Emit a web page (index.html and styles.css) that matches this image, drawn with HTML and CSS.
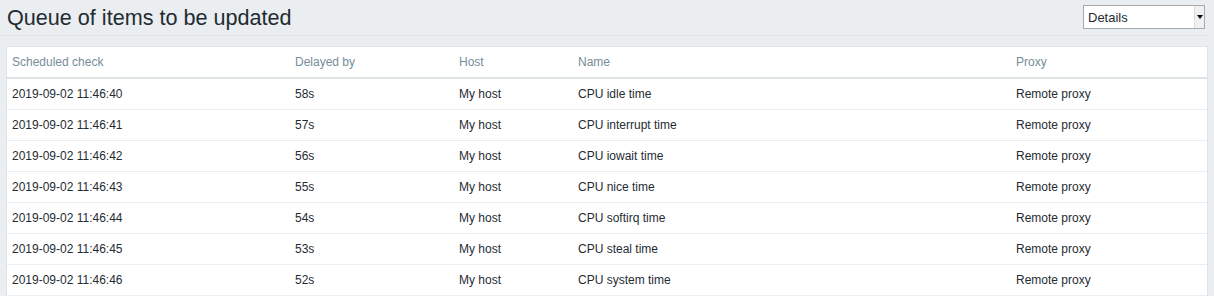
FILE: index.html
```html
<!DOCTYPE html>
<html lang="en">

<head>
    <meta charset="UTF-8">
    <title>Queue of items to be updated</title>
    <link rel="stylesheet" href="styles.css">
</head>

<body>
    <div class="header">
        <h1>Queue of items to be updated</h1>
        <div class="select">
            <span>Details</span>
            <span class="arrow"></span>
        </div>
    </div>

    <div class="list">
        <table>
            <colgroup>
                <col style="width: 283px">
                <col style="width: 164px">
                <col style="width: 119px">
                <col style="width: 438px">
                <col>
            </colgroup>
            <thead>
                <tr>
                    <th>Scheduled check</th>
                    <th>Delayed by</th>
                    <th>Host</th>
                    <th>Name</th>
                    <th>Proxy</th>
                </tr>
            </thead>
            <tbody>
                <tr><td>2019-09-02 11:46:40</td><td>58s</td><td>My host</td><td>CPU idle time</td><td>Remote proxy</td></tr>
                <tr><td>2019-09-02 11:46:41</td><td>57s</td><td>My host</td><td>CPU interrupt time</td><td>Remote proxy</td></tr>
                <tr><td>2019-09-02 11:46:42</td><td>56s</td><td>My host</td><td>CPU iowait time</td><td>Remote proxy</td></tr>
                <tr><td>2019-09-02 11:46:43</td><td>55s</td><td>My host</td><td>CPU nice time</td><td>Remote proxy</td></tr>
                <tr><td>2019-09-02 11:46:44</td><td>54s</td><td>My host</td><td>CPU softirq time</td><td>Remote proxy</td></tr>
                <tr><td>2019-09-02 11:46:45</td><td>53s</td><td>My host</td><td>CPU steal time</td><td>Remote proxy</td></tr>
                <tr><td>2019-09-02 11:46:46</td><td>52s</td><td>My host</td><td>CPU system time</td><td>Remote proxy</td></tr>
            </tbody>
        </table>
    </div>
</body>

</html>
```

FILE: styles.css
```css
body {
    margin: 0;
    background-color: #ebeef0;
    font-family: "Liberation Sans", Arial, sans-serif;
    font-size: 12px;
    color: #1f2c33;
}

.header {
    display: flex;
    justify-content: space-between;
    align-items: flex-start;
    height: 36px;
    margin: 0 6px 0 0;
    padding-left: 7px;
    border-bottom: 1px solid #dfe4e7;
    box-sizing: border-box;
}

h1 {
    margin: 6px 0 0 0;
    font-size: 21.6px;
    font-weight: normal;
    line-height: 24px;
}

.select {
    display: flex;
    align-items: center;
    justify-content: space-between;
    width: 122px;
    height: 24px;
    margin-top: 5px;
    margin-right: 3px;
    padding-left: 4px;
    box-sizing: border-box;
    background-color: #fff;
    border: 1px solid #a9a9a9;
    font-size: 13px;
}

.select .arrow {
    position: relative;
    width: 9px;
    height: 22px;
    border-left: 1px solid #ddd;
    background-color: #f0f0f0;
}

.select .arrow::after {
    content: "";
    position: absolute;
    left: 2px;
    top: 9px;
    border-left: 3px solid transparent;
    border-right: 3px solid transparent;
    border-top: 4px solid #000;
}

.list {
    margin: 10px 6px 0 6px;
    background-color: #fff;
    border: 1px solid #dfe4e7;
    border-bottom: none;
}

table {
    width: 100%;
    border-collapse: collapse;
    table-layout: fixed;
}

th {
    text-align: left;
    font-weight: normal;
    color: #768d99;
    padding: 8px 5px;
    line-height: 14px;
    border-bottom: 2px solid #dfe4e7;
}

td {
    padding: 8px 5px;
    line-height: 14px;
    border-bottom: 1px solid #ebeef0;
}
```
